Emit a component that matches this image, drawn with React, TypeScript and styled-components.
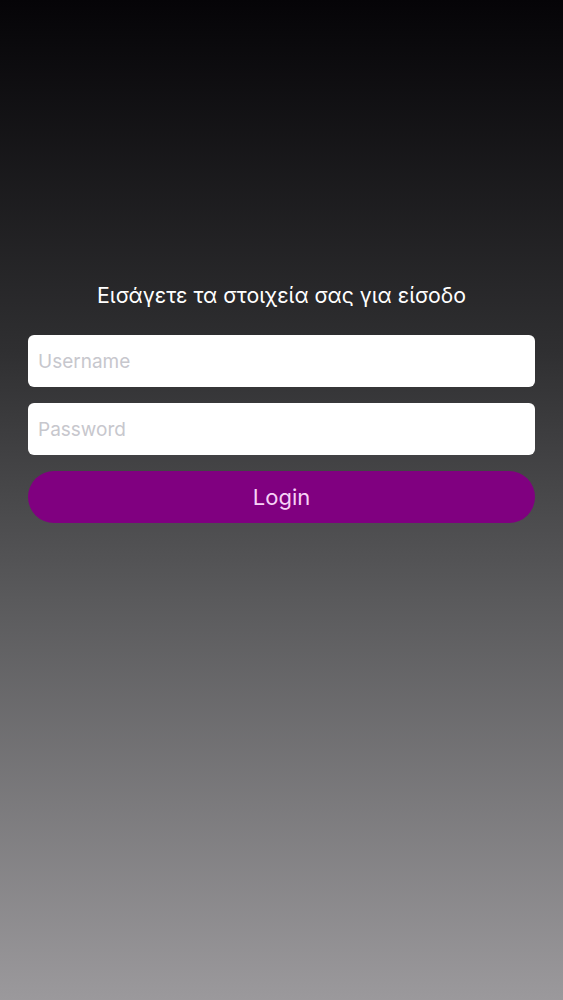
import React, { useState } from 'react';
import styled, { createGlobalStyle } from 'styled-components';

const GlobalStyle = createGlobalStyle`
  html, body {
    margin: 0;
    padding: 0;
    height: 100%;
  }
  body {
    font-family: Inter, "Noto Sans", "Liberation Sans", sans-serif;
    -webkit-font-smoothing: antialiased;
  }
  #root {
    height: 100%;
  }
`;

const Screen = styled.div`
  min-height: 100vh;
  box-sizing: border-box;
  background: linear-gradient(180deg, #050407 0%, #2f2f31 35%, #5a5a5c 60%, #9b999c 100%);
  display: flex;
  flex-direction: column;
  padding: 280px 28px 0;
`;

const Title = styled.h1`
  margin: 0 0 25px;
  text-align: center;
  color: #ffffff;
  font-size: 21.3px;
  font-weight: 400;
  line-height: 30px;
`;

const Form = styled.form`
  display: flex;
  flex-direction: column;
  gap: 16px;
`;

const Field = styled.input`
  box-sizing: border-box;
  width: 100%;
  height: 52px;
  border: none;
  border-radius: 6px;
  background: #ffffff;
  padding: 0 10px;
  font-family: inherit;
  font-size: 19px;
  color: #222;
  outline: none;

  &::placeholder {
    color: #c7c7cd;
  }
`;

const LoginButton = styled.button`
  height: 52px;
  border: none;
  border-radius: 26px;
  background: #800080;
  color: #f7d2f7;
  font-family: inherit;
  font-size: 22px;
  font-weight: 400;
  cursor: pointer;
`;

const App: React.FC = () => {
  const [username, setUsername] = useState('');
  const [password, setPassword] = useState('');

  return (
    <>
      <GlobalStyle />
      <Screen>
        <Title>Εισάγετε τα στοιχεία σας για είσοδο</Title>
        <Form onSubmit={(e) => e.preventDefault()}>
          <Field
            placeholder="Username"
            value={username}
            onChange={(e) => setUsername(e.target.value)}
          />
          <Field
            type="password"
            placeholder="Password"
            value={password}
            onChange={(e) => setPassword(e.target.value)}
          />
          <LoginButton type="submit">Login</LoginButton>
        </Form>
      </Screen>
    </>
  );
};

export default App;
